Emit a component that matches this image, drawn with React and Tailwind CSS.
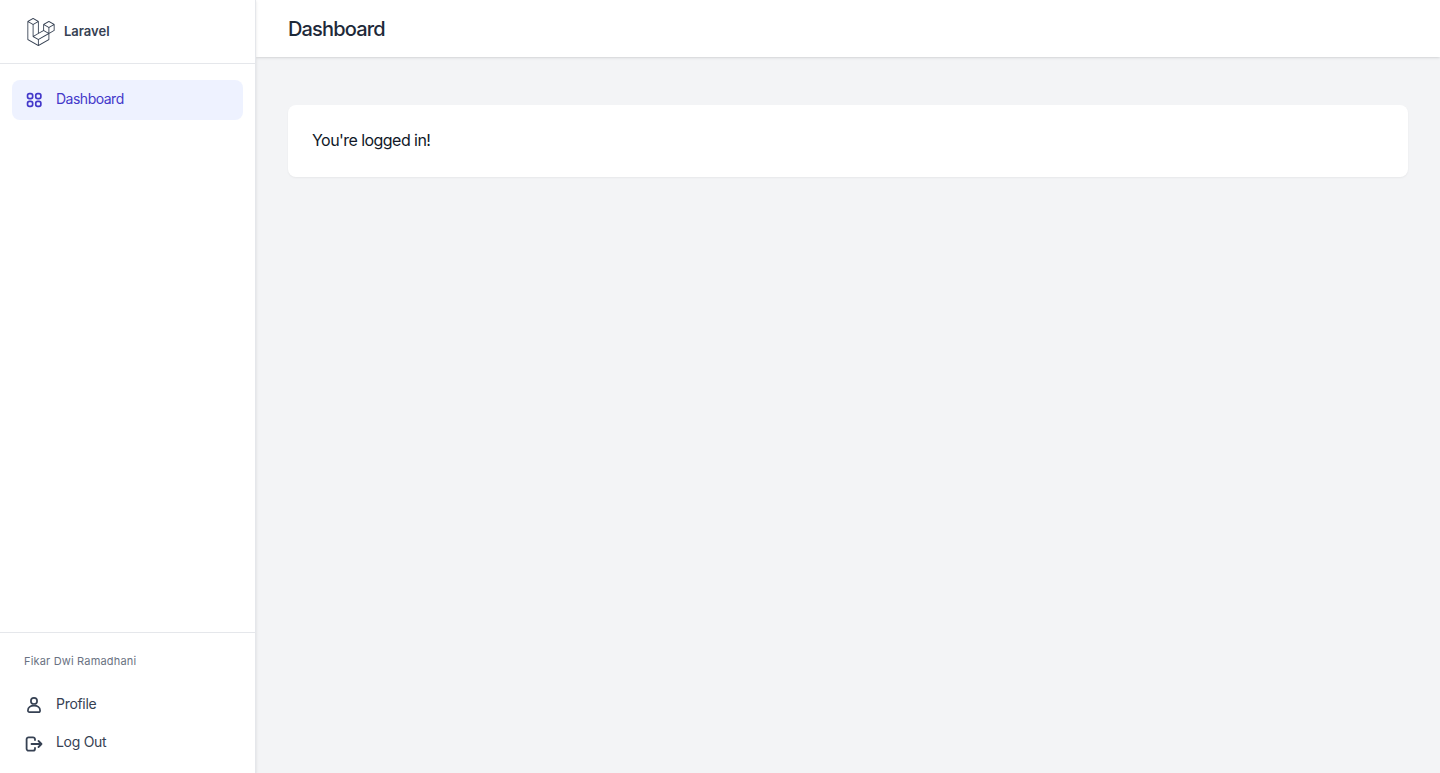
import { SiLaravel } from 'react-icons/si';

function GridIcon() {
  return (
    <svg width="20" height="20" viewBox="0 0 20 20" fill="none" stroke="currentColor" strokeWidth="1.7" className="shrink-0">
      <rect x="3.55" y="3.55" width="5.1" height="5.1" rx="1.9" />
      <rect x="11.75" y="3.55" width="5.1" height="5.1" rx="1.9" />
      <rect x="3.55" y="11.35" width="5.1" height="5.1" rx="1.9" />
      <rect x="11.75" y="11.35" width="5.1" height="5.1" rx="1.9" />
    </svg>
  );
}

function UserIcon() {
  return (
    <svg width="20" height="20" viewBox="0 0 20 20" fill="none" stroke="currentColor" strokeWidth="1.7" className="mt-0.5 shrink-0">
      <circle cx="10" cy="5.9" r="3.1" />
      <path d="M3.9 15.4c0-2.9 2.6-4.7 6.1-4.7s6.1 1.8 6.1 4.7c0 1-.7 1.7-1.6 1.7H5.5c-.9 0-1.6-.7-1.6-1.7z" />
    </svg>
  );
}

function LogoutIcon() {
  return (
    <svg width="20" height="20" viewBox="0 0 20 20" fill="none" stroke="currentColor" strokeWidth="1.8" strokeLinecap="round" strokeLinejoin="round" className="mt-0.5 shrink-0">
      <path d="M11 7V6.3a2 2 0 0 0-2-2H4.6a2 2 0 0 0-2 2v9.4a2 2 0 0 0 2 2H9a2 2 0 0 0 2-2V15" />
      <path d="M7.5 11h10M14.5 8l3 3-3 3" />
    </svg>
  );
}

function App() {
  return (
    <div className="flex h-screen bg-gray-100 font-['Inter',sans-serif] text-gray-900">
      {/* sidebar */}
      <aside className="z-10 flex w-64 shrink-0 flex-col border-r border-gray-200 bg-white shadow-sm">
        <div className="flex h-16 items-center gap-[9px] border-b border-gray-200 pl-[27px]">
          <SiLaravel size={28} className="text-gray-700" />
          <span className="text-[13px] font-semibold tracking-[0px] text-gray-700">Laravel</span>
        </div>
        <nav className="flex-1 px-3 py-4">
          <a className="flex h-10 items-center gap-3 rounded-lg bg-indigo-50 px-3 text-[#4338ca]">
            <GridIcon />
            <span className="mb-0.5 text-sm tracking-[-0.5px]">Dashboard</span>
          </a>
        </nav>
        <div className="border-t border-gray-200 px-3 pt-5 pb-3">
          <p className="px-3 text-[11px] leading-4 tracking-[0.18px] text-gray-500">Fikar Dwi Ramadhani</p>
          <div className="mt-4 flex flex-col">
            <a className="flex h-[38px] items-center gap-3 px-3 text-gray-700">
              <UserIcon />
              <span className="text-sm tracking-[-0.3px]">Profile</span>
            </a>
            <a className="flex h-[38px] items-center gap-3 px-3 text-gray-700">
              <LogoutIcon />
              <span className="text-sm tracking-[-0.3px]">Log Out</span>
            </a>
          </div>
        </div>
      </aside>

      {/* main */}
      <div className="flex min-w-0 flex-1 flex-col">
        <header className="flex h-[57px] items-center bg-white px-8 shadow-sm">
          <h1 className="text-xl font-[550] tracking-[-0.85px] text-gray-800">Dashboard</h1>
        </header>
        <main className="px-8 py-12">
          <div className="rounded-lg bg-white px-6 pt-[23px] pb-[25px] shadow-[0_1px_2px_0_rgb(0_0_0/0.05)]">
            <p className="text-base tracking-[-0.55px]">You're logged in!</p>
          </div>
        </main>
      </div>
    </div>
  );
}

export default App;
